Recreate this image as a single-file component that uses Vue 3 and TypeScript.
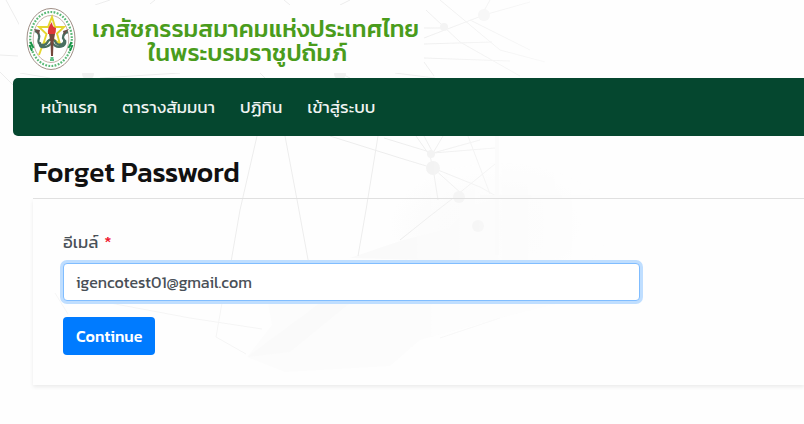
<script setup lang="ts">
import { onMounted, ref } from 'vue'

interface MenuItem {
  label: string
  href: string
}

const menu: MenuItem[] = [
  { label: 'หน้าแรก', href: '#home' },
  { label: 'ตารางสัมมนา', href: '#seminars' },
  { label: 'ปฏิทิน', href: '#calendar' },
  { label: 'เข้าสู่ระบบ', href: '#login' },
]

const email = ref('igencotest01@gmail.com')
const emailInput = ref<HTMLInputElement | null>(null)

onMounted(() => emailInput.value?.focus())
</script>

<template>
  <div class="page">
    <svg class="backdrop" width="660" height="424" viewBox="0 0 660 424" aria-hidden="true">
      <defs>
        <radialGradient id="haze">
          <stop offset="0" stop-color="#fafafa" />
          <stop offset="0.6" stop-color="#fbfbfb" />
          <stop offset="1" stop-color="#fefefe" />
        </radialGradient>
        <linearGradient id="fade" x1="0" x2="1" y1="0" y2="0">
          <stop offset="0" stop-color="#fff" />
          <stop offset="0.6" stop-color="#fff" />
          <stop offset="0.92" stop-color="#000" />
        </linearGradient>
        <mask id="fadeMask"><rect width="660" height="424" fill="url(#fade)" /></mask>
      </defs>
      <g mask="url(#fadeMask)">
        <ellipse cx="500" cy="225" rx="110" ry="62" fill="url(#haze)" />
        <path d="M268 303 560 303 500 318 420 340 390 366 285 372 247 357 272 325Z" fill="#fcfcfc" />
        <path d="M247 357 320 303 350 303 290 352Z" fill="#fafafa" />
        <path d="M350 258 400 241 450 228 470 206 498 198 498 262Z" fill="#fafafa" />
        <g fill="none" stroke="#ededed">
          <path d="M0 72 14 86M0 55 18 56M6 0 20 26M95 5 110 0M150 4 155 0M290 5 284 0M340 5 350 0" />
          <path d="M257 136 240 210 231 262M285 136 298 205 309 265M378 136 366 210 358 256M330 136 400 158 433 168M384 138 433 153 480 140M424 136 433 153 443 136M416 136 430 156 433 168M433 153 495 148M433 168 480 187 496 196M433 168 462 194M433 168 438 200M468 136 490 194M400 240 430 216 452 199 495 164" />
          <path d="M426 10 460 42 520 76M424 38 484 15 530 2M424 44 492 42M424 58 510 61M424 62 434 76M440 0 500 50 545 62M470 20 530 50M424 28 446 28M490 0 480 18" />
          <path d="M100 78 180 73M260 73 265 78M340 73 350 78M395 73 435 78M20 73 50 78" />
        </g>
        <path d="M55 293 68 314M110 303 190 318 262 329M222 303 216 337 246 354M440 338 500 318" fill="none" stroke="#f5f5f5" />
        <g fill="#f1f1f1">
          <circle cx="433" cy="168" r="7" />
          <circle cx="484" cy="15" r="6" />
          <circle cx="444" cy="27" r="4" />
          <circle cx="459" cy="197" r="6" />
          <circle cx="431" cy="154" r="4" />
          <circle cx="478" cy="226" r="6" />
          <circle cx="340" cy="74" r="6" />
          <circle cx="88" cy="74" r="6" />
        </g>
        <path d="M497 136V255M480 197H590" stroke="#f8f8f8" stroke-width="4" fill="none" />
      </g>
    </svg>

    <header class="brand">
      <svg class="emblem" width="52" height="64" viewBox="0 0 52 64" role="img" aria-label="ตราสมาคม">
        <ellipse cx="26" cy="32" rx="24" ry="30.5" fill="#fff" stroke="#a08f86" />
        <ellipse cx="26" cy="32" rx="20.8" ry="27" fill="none" stroke="#5cb877" stroke-width="2.2" stroke-dasharray="1.8 1.4" />
        <ellipse cx="26" cy="32" rx="17.8" ry="23.5" fill="#fff" stroke="#b59c90" stroke-width=".8" />
        <path d="M4.500 38 7 44M5.500 35 8.500 41M47.500 38 45 44M46.500 35 43.500 41" stroke="#179447" stroke-width="1.800" />
        <path d="M27 10 30 20H39L32 26.500 35 37 27 31 18 38 21.500 27 14 20H23ZM18 37 14 48" fill="none" stroke="#e5d630" stroke-width="1.900" />
        <path d="M10 24Q15 26 14 31Q12 37 17 38Q22 38 23 34Q26 31 30 34Q32 39 37 37Q41 35 38 31Q38 26 43 25M15 35Q14 41 19 40Q24 40 27 35Q31 42 38 39Q41 37 40 33" fill="none" stroke="#496f60" stroke-width="2.300" />
        <path d="m9 22 6 1-1 5ZM44 22l-6 2 1 4Z" fill="#685047" />
        <path d="M24 27h6l-1.500 8-.5 14h-2l-.5-14Z" fill="#74473b" />
        <path d="M23 27Q22 21 27 15Q27 20 31 21Q31 25 30 27Z" fill="#de3938" />
        <path d="M25.500 51h3M25 53h4" stroke="#2aaa5d" stroke-width="1.500" />
      </svg>
      <div class="brand-name">
        <span>เภสัชกรรมสมาคมแห่งประเทศไทย</span>
        <span class="patronage">ในพระบรมราชูปถัมภ์</span>
      </div>
    </header>

    <nav class="navbar">
      <a v-for="item in menu" :key="item.href" :href="item.href">{{ item.label }}</a>
    </nav>

    <main class="content">
      <h1>Forget Password</h1>
      <form class="card" @submit.prevent>
        <label for="email">อีเมล์ <span class="required">*</span></label>
        <input id="email" ref="emailInput" v-model="email" type="email" required />
        <button type="submit">Continue</button>
      </form>
    </main>
  </div>
</template>

<style>
body {
  background: #fefefe;
}
</style>

<style scoped>
.page {
  position: relative;
  min-height: 100vh;
  overflow: hidden;
  font-family: Kanit, Prompt, Roboto, "Noto Sans Thai", "Noto Sans", sans-serif;
  font-size: 16px;
  line-height: 24px;
  color: #495057;
}

.page * {
  box-sizing: border-box;
}

.backdrop {
  position: absolute;
  top: 0;
  left: 0;
}

.brand,
.navbar,
.content {
  position: relative;
}

.brand {
  display: flex;
  align-items: center;
  gap: 15px;
  width: fit-content;
  height: 68px;
  margin: 5px 0 5px 19px;
  padding: 0 4px 0 6px;
  background: #fefefe;
}

.emblem {
  flex: none;
}

.brand-name {
  display: flex;
  flex-direction: column;
  align-items: center;
  padding-top: 4px;
  font-size: 24px;
  font-weight: 500;
  line-height: 24px;
  white-space: nowrap;
  color: #4a9c1c;
}

.patronage {
  padding-right: 16px;
}

.navbar {
  display: flex;
  align-items: center;
  gap: 25px;
  margin-left: 13px;
  padding: 17px 28px;
  border-radius: 5px 0 0 5px;
  background: #05472f;
}

.navbar a {
  color: #f0f4f2;
  font-size: 17px;
  text-decoration: none;
  white-space: nowrap;
}

.content {
  padding: 19px 0 32px 33px;
}

h1 {
  margin: 0;
  padding-bottom: 9px;
  border-bottom: 1px solid #e2e2e2;
  font-size: 28px;
  font-weight: 500;
  line-height: 34px;
  color: #111;
}

.card {
  display: flex;
  flex-direction: column;
  align-items: flex-start;
  padding: 31px 30px 30px;
  box-shadow: 0 2px 4px rgba(0, 0, 0, 0.08);
}

label {
  margin-bottom: 9px;
  font-size: 17px;
}

.required {
  margin-left: 2px;
  color: #f01830;
}

input {
  width: 100%;
  max-width: 577px;
  height: 38px;
  margin: 0 0 16px;
  padding: 6px 12px;
  border: 1px solid #80bdff;
  border-radius: 4px;
  background: #fff;
  color: #495057;
  font: inherit;
  caret-color: transparent;
}

input:focus {
  outline: 0;
  box-shadow: 0 0 0 3px #bfdeff;
}

button {
  height: 38px;
  padding: 6px 13px;
  border: 0;
  border-radius: 4px;
  background: #007bff;
  color: #fff;
  font: inherit;
  font-weight: 500;
}
</style>
